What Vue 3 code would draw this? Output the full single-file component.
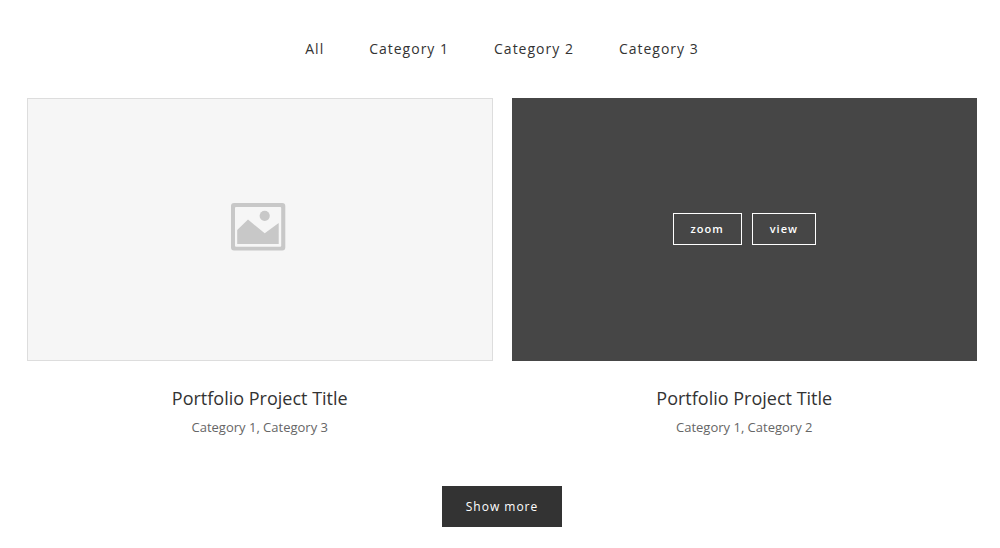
<script setup>
const filters = ['All', 'Category 1', 'Category 2', 'Category 3']
</script>

<template>
  <main class="portfolio">
    <nav class="filters" aria-label="Portfolio categories">
      <a v-for="f in filters" :key="f" href="#">{{ f }}</a>
    </nav>
    <div class="grid">
      <article class="item">
        <div class="thumb">
          <svg width="60" height="53" viewBox="0 0 60 53" aria-hidden="true">
            <path fill="#c8c8c8" fill-rule="evenodd" d="M4 1H52.3Q55.3 1 55.3 4V45.6Q55.3 48.6 52.3 48.6H4Q1 48.6 1 45.6V4Q1 1 4 1ZM6 5Q5 5 5 6V43.7Q5 44.7 6 44.7H50.2Q51.2 44.7 51.2 43.7V6Q51.2 5 50.2 5Z" />
            <circle fill="#c8c8c8" cx="34.7" cy="13.8" r="5.1" />
            <path fill="#c8c8c8" d="M7.2 42V28L18 17.6L34.7 31.3L48.7 21V42Z" />
          </svg>
        </div>
        <h2>Portfolio Project Title</h2>
        <p class="categories">Category 1, Category 3</p>
      </article>
      <article class="item">
        <div class="thumb active">
          <button type="button">zoom</button>
          <button type="button">view</button>
        </div>
        <h2>Portfolio Project Title</h2>
        <p class="categories">Category 1, Category 2</p>
      </article>
    </div>
    <button class="more" type="button">Show more</button>
  </main>
</template>

<style>
body {
  background: #fff;
}
</style>

<style scoped>
.portfolio {
  display: flex;
  flex-direction: column;
  align-items: center;
  padding: 39px 23px 20px 27px;
  font-family: "Open Sans", sans-serif;
  color: #333;
}
.filters {
  display: flex;
  gap: 45px;
  font-size: 14px;
  line-height: 20px;
  letter-spacing: 1px;
}
.filters a {
  color: #333;
  text-decoration: none;
}
.grid {
  align-self: stretch;
  display: grid;
  grid-template-columns: 1fr 1fr;
  gap: 19px;
  margin-top: 39px;
}
.item {
  text-align: center;
}
.thumb {
  box-sizing: border-box;
  height: 263px;
  padding-bottom: 2px;
  display: flex;
  align-items: center;
  justify-content: center;
  gap: 10px;
  background: #f6f6f6;
  border: 1px solid #ddd;
}
.thumb.active {
  background: #464646;
  border-color: #464646;
}
.thumb button {
  box-sizing: border-box;
  height: 32px;
  padding: 0 17px;
  border: 1px solid #fff;
  background: transparent;
  color: #fff;
  font: 600 11px/16px "Open Sans", sans-serif;
  letter-spacing: 1px;
}
h2 {
  margin: 24px 0 0;
  font-size: 18px;
  line-height: 26px;
  font-weight: 400;
}
.categories {
  margin: 6px 0 0;
  font-size: 13px;
  line-height: 20px;
  color: #666;
}
.more {
  height: 41px;
  margin-top: 49px;
  padding: 0 24px;
  border: 0;
  background: #333;
  color: #fff;
  font: 500 12px/18px "Open Sans", sans-serif;
  letter-spacing: 1px;
}
</style>
